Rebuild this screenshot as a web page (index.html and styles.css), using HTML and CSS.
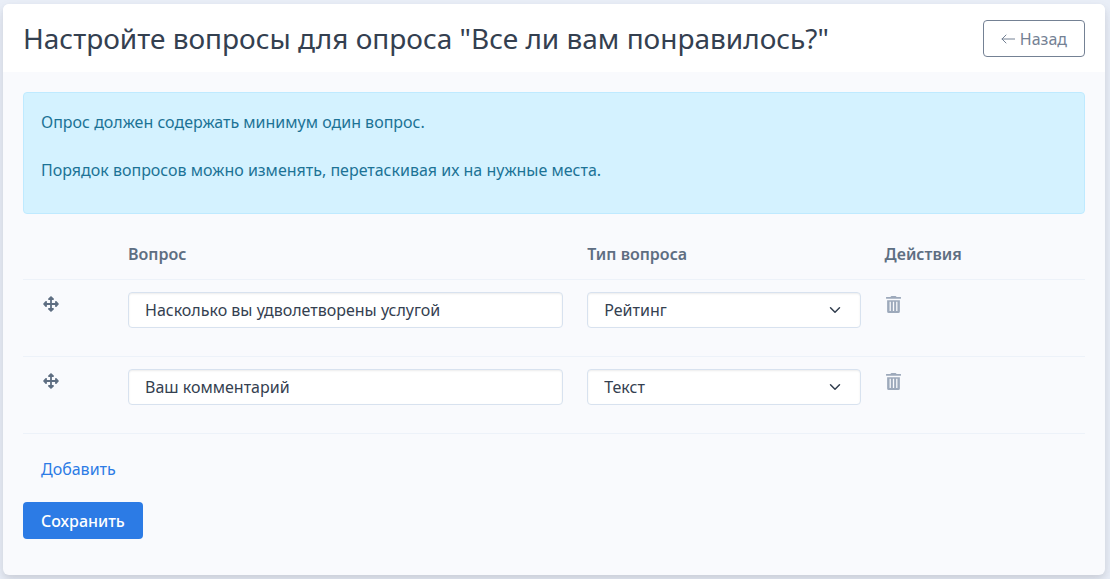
FILE: index.html
```
<!DOCTYPE html>
<html lang="ru">
<head>
    <meta charset="UTF-8">
    <meta name="viewport" content="width=device-width, initial-scale=1.0">
    <title>Настройка вопросов</title>
    <link rel="stylesheet" href="styles.css">
</head>
<body>
    <svg class="sprite" aria-hidden="true">
        <symbol id="icon-move" viewBox="0 0 16 16">
            <path d="M8 0l2.700 2.400q.6.600.2 1.100t-.9.400H8.900v3.200h3.200V6q0-.600.4-.9t1.100.2L16 8l-2.400 2.700q-.6.600-1.100.2t-.4-.9V8.900H8.900v3.200H10q.600 0 .9.400t-.2 1.100L8 16l-2.700-2.400q-.600-.600-.2-1.100t.9-.4h1.100V8.900H3.900V10q0 .600-.4.9t-1.100-.2L0 8l2.400-2.700q.600-.600 1.100-.2t.4.900v1.100h3.200V3.900H6q-.600 0-.9-.4t.2-1.100z"/>
        </symbol>
        <symbol id="icon-trash" viewBox="0 0 14 16">
            <path fill-rule="evenodd" d="M0 1h4L5 0h4l1 1h4v1.500H0zM1 4h12v10.500a1.500 1.500 0 0 1-1.500 1.500h-9A1.500 1.500 0 0 1 1 14.500zM3.300 5.500v8.500h1.200V5.500zM6.400 5.500v8.500h1.200V5.500zM9.500 5.500v8.500h1.200V5.500z"/>
        </symbol>
    </svg>

    <form class="card">
        <div class="card-header">
            <h1>Настройте вопросы для опроса "Все ли вам понравилось?"</h1>
            <a href="#" class="btn btn-outline">
                <svg class="arrow" viewBox="0 0 14 10" aria-hidden="true"><path d="M14 5H1M5 1L1 5l4 4"/></svg>
                Назад
            </a>
        </div>
        <div class="card-body">
            <div class="alert">
                <p>Опрос должен содержать минимум один вопрос.</p>
                <p>Порядок вопросов можно изменять, перетаскивая их на нужные места.</p>
            </div>

            <table class="questions">
                <thead>
                    <tr>
                        <th class="col-move"></th>
                        <th class="col-question">Вопрос</th>
                        <th class="col-type">Тип вопроса</th>
                        <th class="col-actions">Действия</th>
                    </tr>
                </thead>
                <tbody>
                    <tr>
                        <td class="move"><svg class="icon-move"><use href="#icon-move"/></svg></td>
                        <td><input type="text" class="control" aria-label="Вопрос" value="Насколько вы удволетворены услугой"></td>
                        <td>
                            <select class="control select" aria-label="Тип вопроса">
                                <option selected>Рейтинг</option>
                                <option>Текст</option>
                            </select>
                        </td>
                        <td><button type="button" class="btn-trash" aria-label="Удалить"><svg class="icon-trash"><use href="#icon-trash"/></svg></button></td>
                    </tr>
                    <tr>
                        <td class="move"><svg class="icon-move"><use href="#icon-move"/></svg></td>
                        <td><input type="text" class="control" aria-label="Вопрос" value="Ваш комментарий"></td>
                        <td>
                            <select class="control select" aria-label="Тип вопроса">
                                <option>Рейтинг</option>
                                <option selected>Текст</option>
                            </select>
                        </td>
                        <td><button type="button" class="btn-trash" aria-label="Удалить"><svg class="icon-trash"><use href="#icon-trash"/></svg></button></td>
                    </tr>
                </tbody>
            </table>

            <div class="actions">
                <button type="button" class="btn btn-link">Добавить</button>
                <button type="submit" class="btn btn-primary">Сохранить</button>
            </div>
        </div>
    </form>
</body>
</html>
```

FILE: styles.css
```
* {
    box-sizing: border-box;
}
body {
    margin: 0;
    padding: 4px 5px 4px 3px;
    background: #e9eef7;
    color: #344050;
    font-family: "Noto Sans", sans-serif;
    font-size: 16px;
    line-height: 24px;
}
.sprite {
    display: none;
}
.card {
    background: #f9fafd;
    border-radius: 6px;
    box-shadow: 0 7px 14px 0 rgba(65, 69, 88, 0.1), 0 3px 6px 0 rgba(0, 0, 0, 0.07);
    overflow: hidden;
}
.card-header {
    display: flex;
    align-items: flex-start;
    justify-content: space-between;
    padding: 16px 20px 15px;
    background: #fff;
}
h1 {
    margin: 0;
    font-size: 28px;
    font-weight: 400;
    line-height: 36px;
}
.card-body {
    padding: 20px 20px 36px;
}
.alert {
    padding: 17px 17px 15px;
    border: 1px solid #bfeaff;
    border-radius: 4px;
    background: #d4f2ff;
    color: #1c7396;
}
.alert p {
    margin: 0 0 24px;
}
.alert p:last-child {
    margin-bottom: 16px;
}
.btn {
    display: inline-flex;
    align-items: center;
    gap: 5px;
    height: 37px;
    padding: 0 17px;
    border: 1px solid transparent;
    border-radius: 4px;
    background: none;
    font-family: inherit;
    font-size: 16px;
    line-height: 24px;
    text-decoration: none;
    cursor: pointer;
}
.btn-outline {
    border-color: #748194;
    color: #748194;
}
.arrow {
    width: 14px;
    height: 10px;
    fill: none;
    stroke: currentColor;
    stroke-linecap: round;
}
.btn-link {
    color: #2c7be5;
}
.btn-primary {
    background: #2c7be5;
    color: #fff;
    font-weight: 500;
}
.questions {
    width: 100%;
    margin-top: 16px;
    border-collapse: collapse;
    table-layout: fixed;
}
.questions th,
.questions td {
    padding: 12px;
    border-bottom: 1px solid #edf2f9;
    text-align: left;
    vertical-align: top;
}
.questions th {
    padding-bottom: 13px;
    color: #5e6e82;
    font-weight: 600;
}
.questions td.move {
    padding-left: 20px;
}
.col-move {
    width: 93px;
}
.col-type {
    width: 28%;
}
.col-actions {
    width: 20%;
}
.control {
    display: block;
    width: 100%;
    height: 36px;
    margin-bottom: 16px;
    padding: 0 16px;
    border: 1px solid #d8e2ef;
    border-radius: 4px;
    background: #fff;
    box-shadow: inset 0 1px 2px rgba(0, 0, 0, 0.075);
    color: #344050;
    font-family: inherit;
    font-size: 16px;
}
.select {
    appearance: none;
    background: #fff url("data:image/svg+xml,%3Csvg xmlns='http://www.w3.org/2000/svg' viewBox='0 0 16 16'%3E%3Cpath fill='none' stroke='%23344050' stroke-width='2' stroke-linecap='round' stroke-linejoin='round' d='M2 5l6 6 6-6'/%3E%3C/svg%3E") no-repeat right 19px center / 12px 12px;
}
.icon-move {
    display: block;
    width: 16px;
    height: 16px;
    margin-top: 4px;
    fill: #5e6e82;
}
.btn-trash {
    display: block;
    margin-top: 4px;
    padding: 0 1px;
    border: 0;
    background: none;
    cursor: pointer;
}
.icon-trash {
    display: block;
    width: 15px;
    height: 17px;
    fill: #9da9bb;
}
.actions {
    display: flex;
    flex-direction: column;
    align-items: flex-start;
    gap: 15px;
    margin-top: 16px;
}
```
